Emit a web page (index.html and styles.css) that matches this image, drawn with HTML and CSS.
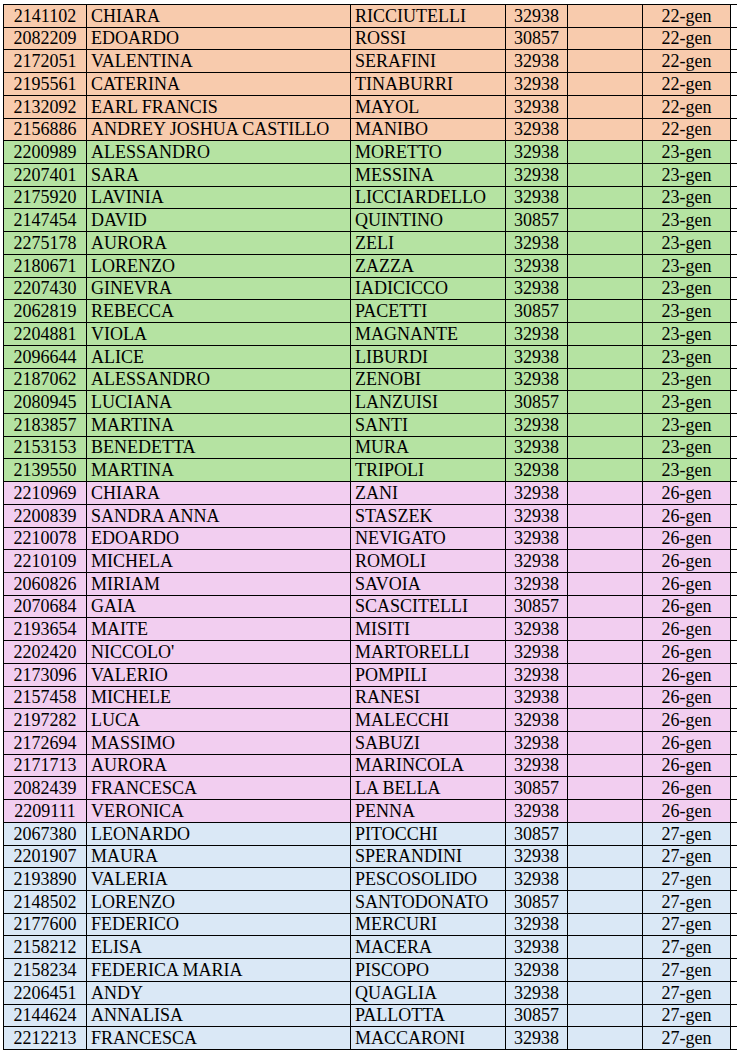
FILE: index.html
```html
<!DOCTYPE html>
<html lang="it">
<head>
<meta charset="utf-8">
<link rel="stylesheet" href="styles.css">
</head>
<body>
<table class="sheet">
<colgroup>
<col class="c-id"><col class="c-name"><col class="c-surname"><col class="c-code"><col class="c-empty"><col class="c-date"><col class="c-extra">
</colgroup>
<tbody>
<tr class="g1"><td class="num">2141102</td><td>CHIARA</td><td>RICCIUTELLI</td><td class="num">32938</td><td></td><td class="num">22-gen</td><td class="x"></td></tr>
<tr class="g1"><td class="num">2082209</td><td>EDOARDO</td><td>ROSSI</td><td class="num">30857</td><td></td><td class="num">22-gen</td><td class="x"></td></tr>
<tr class="g1"><td class="num">2172051</td><td>VALENTINA</td><td>SERAFINI</td><td class="num">32938</td><td></td><td class="num">22-gen</td><td class="x"></td></tr>
<tr class="g1"><td class="num">2195561</td><td>CATERINA</td><td>TINABURRI</td><td class="num">32938</td><td></td><td class="num">22-gen</td><td class="x"></td></tr>
<tr class="g1"><td class="num">2132092</td><td>EARL FRANCIS</td><td>MAYOL</td><td class="num">32938</td><td></td><td class="num">22-gen</td><td class="x"></td></tr>
<tr class="g1"><td class="num">2156886</td><td>ANDREY JOSHUA CASTILLO</td><td>MANIBO</td><td class="num">32938</td><td></td><td class="num">22-gen</td><td class="x"></td></tr>
<tr class="g2"><td class="num">2200989</td><td>ALESSANDRO</td><td>MORETTO</td><td class="num">32938</td><td></td><td class="num">23-gen</td><td class="x"></td></tr>
<tr class="g2"><td class="num">2207401</td><td>SARA</td><td>MESSINA</td><td class="num">32938</td><td></td><td class="num">23-gen</td><td class="x"></td></tr>
<tr class="g2"><td class="num">2175920</td><td>LAVINIA</td><td>LICCIARDELLO</td><td class="num">32938</td><td></td><td class="num">23-gen</td><td class="x"></td></tr>
<tr class="g2"><td class="num">2147454</td><td>DAVID</td><td>QUINTINO</td><td class="num">30857</td><td></td><td class="num">23-gen</td><td class="x"></td></tr>
<tr class="g2"><td class="num">2275178</td><td>AURORA</td><td>ZELI</td><td class="num">32938</td><td></td><td class="num">23-gen</td><td class="x"></td></tr>
<tr class="g2"><td class="num">2180671</td><td>LORENZO</td><td>ZAZZA</td><td class="num">32938</td><td></td><td class="num">23-gen</td><td class="x"></td></tr>
<tr class="g2"><td class="num">2207430</td><td>GINEVRA</td><td>IADICICCO</td><td class="num">32938</td><td></td><td class="num">23-gen</td><td class="x"></td></tr>
<tr class="g2"><td class="num">2062819</td><td>REBECCA</td><td>PACETTI</td><td class="num">30857</td><td></td><td class="num">23-gen</td><td class="x"></td></tr>
<tr class="g2"><td class="num">2204881</td><td>VIOLA</td><td>MAGNANTE</td><td class="num">32938</td><td></td><td class="num">23-gen</td><td class="x"></td></tr>
<tr class="g2"><td class="num">2096644</td><td>ALICE</td><td>LIBURDI</td><td class="num">32938</td><td></td><td class="num">23-gen</td><td class="x"></td></tr>
<tr class="g2"><td class="num">2187062</td><td>ALESSANDRO</td><td>ZENOBI</td><td class="num">32938</td><td></td><td class="num">23-gen</td><td class="x"></td></tr>
<tr class="g2"><td class="num">2080945</td><td>LUCIANA</td><td>LANZUISI</td><td class="num">30857</td><td></td><td class="num">23-gen</td><td class="x"></td></tr>
<tr class="g2"><td class="num">2183857</td><td>MARTINA</td><td>SANTI</td><td class="num">32938</td><td></td><td class="num">23-gen</td><td class="x"></td></tr>
<tr class="g2"><td class="num">2153153</td><td>BENEDETTA</td><td>MURA</td><td class="num">32938</td><td></td><td class="num">23-gen</td><td class="x"></td></tr>
<tr class="g2"><td class="num">2139550</td><td>MARTINA</td><td>TRIPOLI</td><td class="num">32938</td><td></td><td class="num">23-gen</td><td class="x"></td></tr>
<tr class="g3"><td class="num">2210969</td><td>CHIARA</td><td>ZANI</td><td class="num">32938</td><td></td><td class="num">26-gen</td><td class="x"></td></tr>
<tr class="g3"><td class="num">2200839</td><td>SANDRA ANNA</td><td>STASZEK</td><td class="num">32938</td><td></td><td class="num">26-gen</td><td class="x"></td></tr>
<tr class="g3"><td class="num">2210078</td><td>EDOARDO</td><td>NEVIGATO</td><td class="num">32938</td><td></td><td class="num">26-gen</td><td class="x"></td></tr>
<tr class="g3"><td class="num">2210109</td><td>MICHELA</td><td>ROMOLI</td><td class="num">32938</td><td></td><td class="num">26-gen</td><td class="x"></td></tr>
<tr class="g3"><td class="num">2060826</td><td>MIRIAM</td><td>SAVOIA</td><td class="num">32938</td><td></td><td class="num">26-gen</td><td class="x"></td></tr>
<tr class="g3"><td class="num">2070684</td><td>GAIA</td><td>SCASCITELLI</td><td class="num">30857</td><td></td><td class="num">26-gen</td><td class="x"></td></tr>
<tr class="g3"><td class="num">2193654</td><td>MAITE</td><td>MISITI</td><td class="num">32938</td><td></td><td class="num">26-gen</td><td class="x"></td></tr>
<tr class="g3"><td class="num">2202420</td><td>NICCOLO'</td><td>MARTORELLI</td><td class="num">32938</td><td></td><td class="num">26-gen</td><td class="x"></td></tr>
<tr class="g3"><td class="num">2173096</td><td>VALERIO</td><td>POMPILI</td><td class="num">32938</td><td></td><td class="num">26-gen</td><td class="x"></td></tr>
<tr class="g3"><td class="num">2157458</td><td>MICHELE</td><td>RANESI</td><td class="num">32938</td><td></td><td class="num">26-gen</td><td class="x"></td></tr>
<tr class="g3"><td class="num">2197282</td><td>LUCA</td><td>MALECCHI</td><td class="num">32938</td><td></td><td class="num">26-gen</td><td class="x"></td></tr>
<tr class="g3"><td class="num">2172694</td><td>MASSIMO</td><td>SABUZI</td><td class="num">32938</td><td></td><td class="num">26-gen</td><td class="x"></td></tr>
<tr class="g3"><td class="num">2171713</td><td>AURORA</td><td>MARINCOLA</td><td class="num">32938</td><td></td><td class="num">26-gen</td><td class="x"></td></tr>
<tr class="g3"><td class="num">2082439</td><td>FRANCESCA</td><td>LA BELLA</td><td class="num">30857</td><td></td><td class="num">26-gen</td><td class="x"></td></tr>
<tr class="g3"><td class="num">2209111</td><td>VERONICA</td><td>PENNA</td><td class="num">32938</td><td></td><td class="num">26-gen</td><td class="x"></td></tr>
<tr class="g4"><td class="num">2067380</td><td>LEONARDO</td><td>PITOCCHI</td><td class="num">30857</td><td></td><td class="num">27-gen</td><td class="x"></td></tr>
<tr class="g4"><td class="num">2201907</td><td>MAURA</td><td>SPERANDINI</td><td class="num">32938</td><td></td><td class="num">27-gen</td><td class="x"></td></tr>
<tr class="g4"><td class="num">2193890</td><td>VALERIA</td><td>PESCOSOLIDO</td><td class="num">32938</td><td></td><td class="num">27-gen</td><td class="x"></td></tr>
<tr class="g4"><td class="num">2148502</td><td>LORENZO</td><td>SANTODONATO</td><td class="num">30857</td><td></td><td class="num">27-gen</td><td class="x"></td></tr>
<tr class="g4"><td class="num">2177600</td><td>FEDERICO</td><td>MERCURI</td><td class="num">32938</td><td></td><td class="num">27-gen</td><td class="x"></td></tr>
<tr class="g4"><td class="num">2158212</td><td>ELISA</td><td>MACERA</td><td class="num">32938</td><td></td><td class="num">27-gen</td><td class="x"></td></tr>
<tr class="g4"><td class="num">2158234</td><td>FEDERICA MARIA</td><td>PISCOPO</td><td class="num">32938</td><td></td><td class="num">27-gen</td><td class="x"></td></tr>
<tr class="g4"><td class="num">2206451</td><td>ANDY</td><td>QUAGLIA</td><td class="num">32938</td><td></td><td class="num">27-gen</td><td class="x"></td></tr>
<tr class="g4"><td class="num">2144624</td><td>ANNALISA</td><td>PALLOTTA</td><td class="num">30857</td><td></td><td class="num">27-gen</td><td class="x"></td></tr>
<tr class="g4"><td class="num">2212213</td><td>FRANCESCA</td><td>MACCARONI</td><td class="num">32938</td><td></td><td class="num">27-gen</td><td class="x"></td></tr>
</tbody>
</table>
</body>
</html>
```
FILE: styles.css
```css
html, body {
  margin: 0;
  padding: 0;
  background: #ffffff;
}
body {
  padding: 4px 0 0 3px;
  font-family: "Liberation Serif", "Times New Roman", serif;
  font-size: 18px;
  color: #000000;
}
.sheet {
  border-collapse: collapse;
  table-layout: fixed;
  width: 734px;
}
.c-id { width: 83px; }
.c-name { width: 264px; }
.c-surname { width: 155px; }
.c-code { width: 62px; }
.c-empty { width: 75px; }
.c-date { width: 88px; }
.c-extra { width: 7px; }
.sheet tr {
  height: 22.73px;
}
.sheet td {
  border: 1px solid #000000;
  padding: 0 4px;
  vertical-align: bottom;
  white-space: nowrap;
  overflow: hidden;
}
.sheet td.num {
  text-align: center;
  padding: 0;
}
.sheet td.x {
  background: #ffffff;
  padding: 0;
}
.g1 td { background: #f8cbad; }
.g2 td { background: #b5e3a2; }
.g3 td { background: #f2cef0; }
.g4 td { background: #dae8f6; }
```
